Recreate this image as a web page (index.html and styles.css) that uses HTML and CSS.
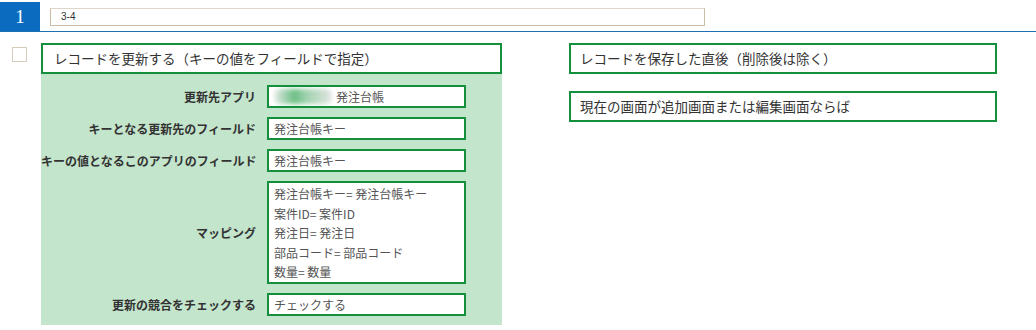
FILE: index.html
```html
<!DOCTYPE html>
<html lang="ja">
<head>
  <meta charset="UTF-8" />
  <title>Process 1</title>
  <link rel="stylesheet" href="styles.css">
</head>
<body>
  <div class="header-bar">
    <div class="step-no">1</div>
    <div class="step-name">3-4</div>
  </div>

  <div class="content">
    <div class="check"></div>

    <div class="action">
      <div class="title-box">レコードを更新する（キーの値をフィールドで指定）</div>
      <div class="settings">
        <div class="row">
          <div class="label">更新先アプリ</div>
          <div class="value"><span class="blur"></span>発注台帳</div>
        </div>
        <div class="row">
          <div class="label">キーとなる更新先のフィールド</div>
          <div class="value">発注台帳キー</div>
        </div>
        <div class="row">
          <div class="label">キーの値となるこのアプリのフィールド</div>
          <div class="value">発注台帳キー</div>
        </div>
        <div class="row">
          <div class="label">マッピング</div>
          <div class="value multi">
            <div>発注台帳キー= 発注台帳キー</div>
            <div>案件ID= 案件ID</div>
            <div>発注日= 発注日</div>
            <div>部品コード= 部品コード</div>
            <div>数量= 数量</div>
          </div>
        </div>
        <div class="row">
          <div class="label">更新の競合をチェックする</div>
          <div class="value">チェックする</div>
        </div>
      </div>
    </div>

    <div class="conditions">
      <div class="cond-box">レコードを保存した直後（削除後は除く）</div>
      <div class="cond-box">現在の画面が追加画面または編集画面ならば</div>
    </div>
  </div>
</body>
</html>
```

FILE: styles.css
```css
html, body {
  margin: 0;
  padding: 0;
  background-color: #ffffff;
  font-family: "Noto Sans CJK JP", "Liberation Sans", sans-serif;
  color: #333333;
}

.header-bar {
  display: flex;
  align-items: flex-start;
  height: 29px;
  padding-top: 2px;
  border-bottom: 1px solid #1f6fb5;
}

.step-no {
  width: 40px;
  height: 29px;
  background-color: #0b6cbf;
  color: #ffffff;
  font-family: "Liberation Serif", serif;
  font-size: 19px;
  line-height: 29px;
  text-align: center;
}

.step-name {
  margin-left: 10px;
  margin-top: 6px;
  width: 643px;
  height: 16px;
  border: 1px solid #cbbca6;
  border-top-color: #e0d6c8;
  font-family: "Liberation Sans", sans-serif;
  font-size: 10px;
  line-height: 16px;
  padding-left: 10px;
  color: #333333;
}

.content {
  display: flex;
  align-items: flex-start;
  padding-top: 11px;
}

.check {
  width: 13px;
  height: 13px;
  margin: 4px 14px 0 12px;
  border: 1px solid #d6cabb;
}

.action {
  width: 461px;
}

.title-box {
  height: 27px;
  border: 2px solid #14903d;
  padding-left: 11px;
  font-size: 13.5px;
  line-height: 27px;
  color: #333333;
}

.settings {
  background-color: #c3e5cc;
  padding: 11px 0 9px 0;
  display: flex;
  flex-direction: column;
  gap: 9px;
}

.row {
  display: flex;
  align-items: center;
}

.label {
  width: 215px;
  text-align: right;
  font-size: 12px;
  font-weight: bold;
  color: #333333;
  white-space: nowrap;
  margin-right: 11px;
}

.value {
  width: 190px;
  height: 19px;
  border: 2px solid #14903d;
  background-color: #ffffff;
  padding-left: 5px;
  font-size: 12px;
  line-height: 19px;
  color: #555555;
  display: flex;
  align-items: center;
  white-space: nowrap;
  overflow: hidden;
}

.value.multi {
  height: 98px;
  flex-direction: column;
  align-items: flex-start;
  padding: 1px 0 0 5px;
}

.value.multi div {
  height: 19.6px;
  line-height: 19.6px;
}

.blur {
  display: inline-block;
  width: 58px;
  height: 15px;
  margin-right: 4px;
  border-radius: 6px;
  background: linear-gradient(90deg, #e6ebe7 0%, #6cbf85 35%, #9fd2ad 55%, #e3e6e4 100%);
  filter: blur(2px);
}

.conditions {
  margin-left: 67px;
  display: flex;
  flex-direction: column;
  gap: 17px;
}

.cond-box {
  width: 415px;
  height: 27px;
  border: 2px solid #14903d;
  padding-left: 9px;
  font-size: 13.5px;
  line-height: 27px;
  color: #333333;
}
```
